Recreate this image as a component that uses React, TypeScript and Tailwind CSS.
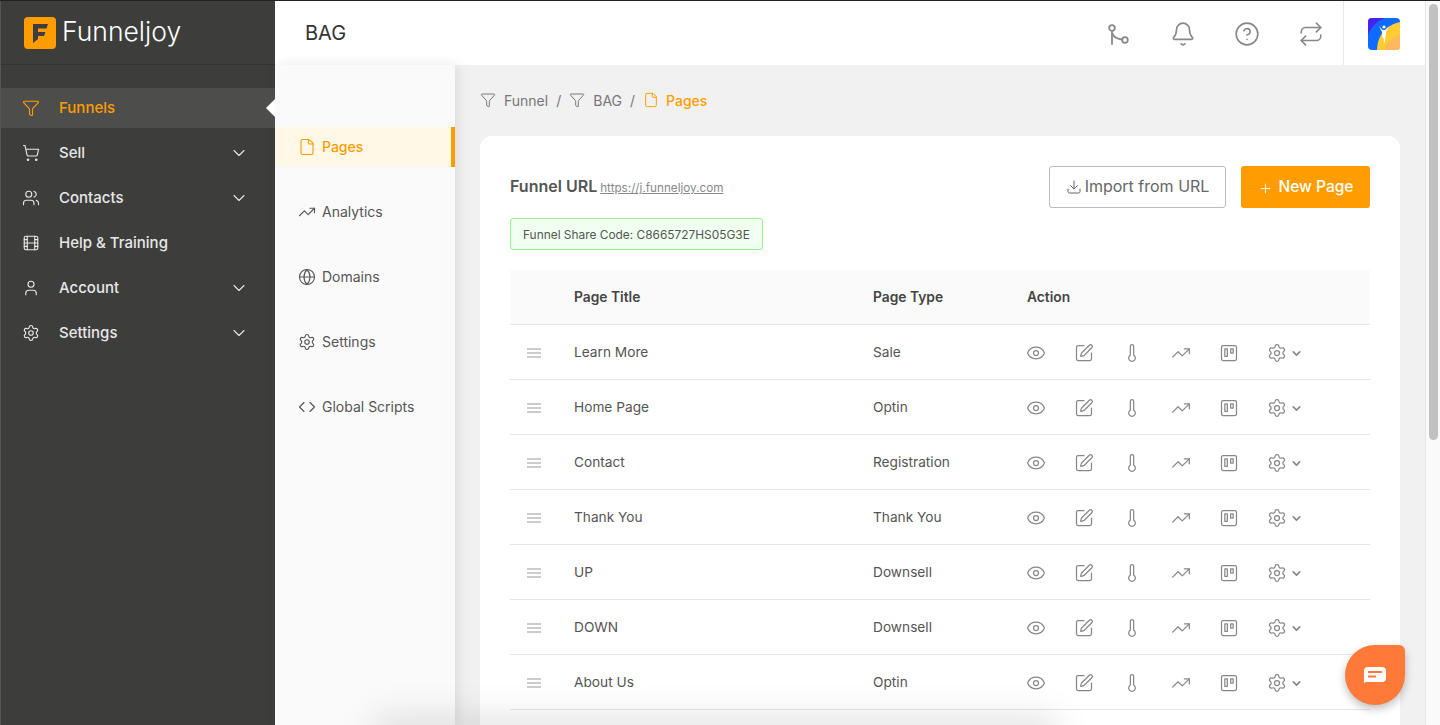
import {
  Bell,
  ChevronDown,
  CircleHelp,
  Code,
  Download,
  Eye,
  File,
  Film,
  Funnel,
  Globe,
  Plus,
  Repeat,
  Settings,
  ShoppingCart,
  SquarePen,
  Thermometer,
  TrendingUp,
  Trello,
  User,
  Users,
} from "lucide-react";

const mainNav = [
  { label: "Funnels", icon: Funnel, active: true },
  { label: "Sell", icon: ShoppingCart, arrow: true },
  { label: "Contacts", icon: Users, arrow: true },
  { label: "Help & Training", icon: Film },
  { label: "Account", icon: User, arrow: true },
  { label: "Settings", icon: Settings, arrow: true },
];

const subNav = [
  { label: "Pages", icon: File, active: true },
  { label: "Analytics", icon: TrendingUp },
  { label: "Domains", icon: Globe },
  { label: "Settings", icon: Settings },
  { label: "Global Scripts", icon: Code },
];

const rows = [
  ["Learn More", "Sale"],
  ["Home Page", "Optin"],
  ["Contact", "Registration"],
  ["Thank You", "Thank You"],
  ["UP", "Downsell"],
  ["DOWN", "Downsell"],
  ["About Us", "Optin"],
];

function RouteIcon() {
  return (
    <svg width="26" height="26" viewBox="0 0 26 26" fill="none" stroke="currentColor" strokeWidth="1.8" strokeLinecap="round">
      <circle cx="6" cy="7" r="2.800" />
      <circle cx="19" cy="19" r="2.800" />
      <path d="M6 9.800V23" />
      <path d="M6.500 13c1.500 3 4.500 5 9.700 5.500" />
    </svg>
  );
}

function Logo() {
  return (
    <svg width="32" height="32" viewBox="0 0 32 32" className="shrink-0">
      <rect width="32" height="32" rx="4" fill="#ff9d00" />
      <path d="M9 7h15l-1.500 4.500H14v3.500h7.500L20 19h-6v3l-5 4z" fill="#3d3d3b" />
    </svg>
  );
}

function Avatar() {
  return (
    <svg width="32" height="32" viewBox="0 0 32 32" className="rounded-[4px]">
      <rect width="32" height="32" fill="#0f6bff" />
      <path d="M0 0h17C9 3 3 9 0 17z" fill="#4a22f0" />
      <path d="M32 4C18 7 9 18 9 32h23z" fill="#ffcc33" />
      <path d="M32 17c-8 2-14 8-15 15h15z" fill="#ffb85c" />
      <path d="M11 8l3.500 4h3L21 8l-3 6-.5 6-1 6-1-6-1 0-.5-6z" fill="#fff" />
      <circle cx="16" cy="9" r="1.600" fill="#fff" />
    </svg>
  );
}

function ActionIcons() {
  const cls = "shrink-0 text-[#888]";
  return (
    <div className="-ml-[1px] mt-[2px] flex items-center">
      <div className="flex w-[48px]"><Eye size={20} strokeWidth={1.5} className={cls} /></div>
      <div className="flex w-[48px]"><SquarePen size={20} strokeWidth={1.5} className={cls} /></div>
      <div className="flex w-[49px]"><Thermometer size={20} strokeWidth={1.5} className={cls} /></div>
      <div className="flex w-[48px]"><TrendingUp size={20} strokeWidth={1.5} className={cls} /></div>
      <div className="flex w-[48px]"><Trello size={20} strokeWidth={1.5} className={cls} /></div>
      <Settings size={20} strokeWidth={1.5} className={cls} />
      <ChevronDown size={13} strokeWidth={3} className="ml-[3px] text-[#888]" />
    </div>
  );
}

export default function App() {
  return (
    <div className="relative flex h-[725px] w-[1440px] overflow-hidden border-t border-[#222] bg-[#f1f1f1] font-['Inter',sans-serif]">
      {/* Main sidebar */}
      <aside className="w-[275px] shrink-0 border-l border-[#555] bg-[#3d3d3b]">
        <div className="flex h-[64px] items-center gap-[6px] border-b border-[#333331] pl-[23px]">
          <Logo />
          <span className="mb-[2px] text-[26.500px] font-light text-white">Funneljoy</span>
        </div>
        <nav className="flex flex-col gap-[5px] pt-[23px]">
          {mainNav.map((item) => (
            <div
              key={item.label}
              className={`relative flex h-[40px] items-center pl-[21px] pr-[26px] text-[15px] font-medium ${
                item.active ? "bg-[#4d4d4c] text-[#ff9d00]" : "text-[#e8e8e8]"
              }`}
            >
              <item.icon size={18} strokeWidth={1.5} className="shrink-0" />
              <span className="ml-[19px] flex-1">{item.label}</span>
              {item.arrow && <ChevronDown size={20} strokeWidth={1.3} />}
              {item.active && (
                <span className="absolute right-0 top-[11px] border-y-[9px] border-r-[9px] border-y-transparent border-r-white" />
              )}
            </div>
          ))}
        </nav>
      </aside>

      <div className="flex min-w-0 flex-1 flex-col">
        {/* Top bar */}
        <header className="flex h-[64px] shrink-0 items-center bg-white pl-[30px]">
          <h1 className="flex-1 text-[20px] font-normal text-[#333]">BAG</h1>
          <div className="mt-[2px] flex items-center gap-[38px] pr-[19px] text-[#888]">
            <RouteIcon />
            <Bell size={26} strokeWidth={1.5} />
            <CircleHelp size={26} strokeWidth={1.5} />
            <Repeat size={26} strokeWidth={1.5} />
          </div>
          <div className="flex h-full w-[82px] items-center border-l border-[#e8e8e8] pl-[24px] pt-[2px]">
            <Avatar />
          </div>
        </header>

        <div className="flex min-h-0 flex-1">
          {/* Funnel sub navigation */}
          <aside className="w-[180px] shrink-0 bg-[#fafafa] pt-[62px] shadow-[3px_0_12px_rgba(0,0,0,0.09)]">
            <nav className="flex flex-col gap-[25px]">
              {subNav.map((item) => (
                <div
                  key={item.label}
                  className={`flex h-[40px] items-center pl-[23px] text-[14px] ${
                    item.active
                      ? "border-r-4 border-[#ff9d00] bg-[#fff8e6] font-medium text-[#ff9d00]"
                      : "text-[#555]"
                  }`}
                >
                  <item.icon size={18} strokeWidth={1.5} className="shrink-0" />
                  <span className="mb-[2px] ml-[6px]">{item.label}</span>
                </div>
              ))}
            </nav>
          </aside>

          {/* Page content */}
          <main className="min-w-0 flex-1 px-[25px] pt-[25px]">
            <div className="flex h-[20px] items-center text-[14px] text-[#777]">
              <Funnel size={16} strokeWidth={1.5} />
              <span className="ml-[8px]">Funnel</span>
              <span className="mx-[8px]">/</span>
              <Funnel size={16} strokeWidth={1.5} />
              <span className="ml-[8px]">BAG</span>
              <span className="mx-[8px]">/</span>
              <File size={16} strokeWidth={1.5} className="text-[#ff9d00]" />
              <span className="ml-[7px] font-medium text-[#ff9d00]">Pages</span>
            </div>

            <section className="mt-[26px] rounded-xl bg-white px-[30px] pb-[40px] pt-[30px]">
              <div className="flex items-start justify-between">
                <div className="pt-[8px]">
                  <span className="text-[16px] font-semibold text-[#555]">Funnel URL</span>
                  <a className="ml-[3px] text-[11.700px] text-[#888] underline">https://j.funneljoy.com</a>
                </div>
                <div className="flex gap-[15px]">
                  <button className="flex h-[42px] w-[177px] items-center justify-center gap-[3px] rounded-[3px] border border-[#bbb] pb-[2px] text-[16px] text-[#666]">
                    <Download size={16} strokeWidth={1.5} className="mt-[2px]" />
                    Import from URL
                  </button>
                  <button className="flex h-[42px] w-[129px] items-center justify-center gap-[6px] rounded-[3px] bg-[#ff9d00] text-[15.500px] font-medium text-white">
                    <Plus size={15} strokeWidth={1.5} className="mt-[2px]" />
                    New Page
                  </button>
                </div>
              </div>

              <div className="mt-[10px] flex h-[32px] w-[253px] items-center rounded-[3px] border border-[#97f28e] bg-[#f1fff0] pl-[12px] pt-[1px] text-[11.900px] text-[#555]">
                Funnel Share Code: C8665727HS05G3E
              </div>

              <div className="mt-[20px]">
                <div className="flex h-[55px] items-center border-b border-[#e6e6e6] bg-[#fafafa] text-[13.800px] font-semibold text-[#444]">
                  <div className="w-[64px]" />
                  <div className="w-[299px]">Page Title</div>
                  <div className="w-[154px]">Page Type</div>
                  <div>Action</div>
                </div>
                {rows.map(([title, type]) => (
                  <div key={title} className="flex h-[55px] items-center border-b border-[#e6e6e6] text-[13.700px] text-[#555]">
                    <div className="mt-[2px] w-[64px] pl-[17px]">
                      <div className="flex w-[14px] flex-col gap-[2px]">
                        <span className="h-[2px] bg-[#ccc]" />
                        <span className="h-[2px] bg-[#ccc]" />
                        <span className="h-[2px] bg-[#ccc]" />
                      </div>
                    </div>
                    <div className="w-[299px]">{title}</div>
                    <div className="w-[154px]">{type}</div>
                    <ActionIcons />
                  </div>
                ))}
              </div>
            </section>
          </main>
        </div>
      </div>

      {/* Scrollbar */}
      <div className="w-[15px] shrink-0 border-l border-[#e8e8e8] bg-[#fafafa] pl-[3px] pt-[3px]">
        <div className="h-[436px] w-[9px] rounded-full bg-[#c1c1c1]" />
      </div>

      {/* Blurred shadow rising from below the fold */}
      <div className="pointer-events-none absolute left-[370px] top-[714px] h-[40px] w-[690px] rounded-full bg-black/10 blur-[16px]" />

      {/* Chat launcher */}
      <div className="absolute left-[1345px] top-[644px] flex h-[60px] w-[60px] items-center justify-center rounded-[30px] rounded-tr-[6px] bg-[#ff7a38] shadow-[0_4px_8px_rgba(0,0,0,0.25)]">
        <svg width="24" height="18" viewBox="0 0 24 18" fill="#fff">
          <path d="M5 1h14a4 4 0 0 1 4 4v7a4 4 0 0 1-4 4H3l-2 1V5a4 4 0 0 1 4-4z" />
          <path d="M5 6h14M5 10.500h8" stroke="#ff7a38" strokeWidth="2" />
        </svg>
      </div>
    </div>
  );
}
